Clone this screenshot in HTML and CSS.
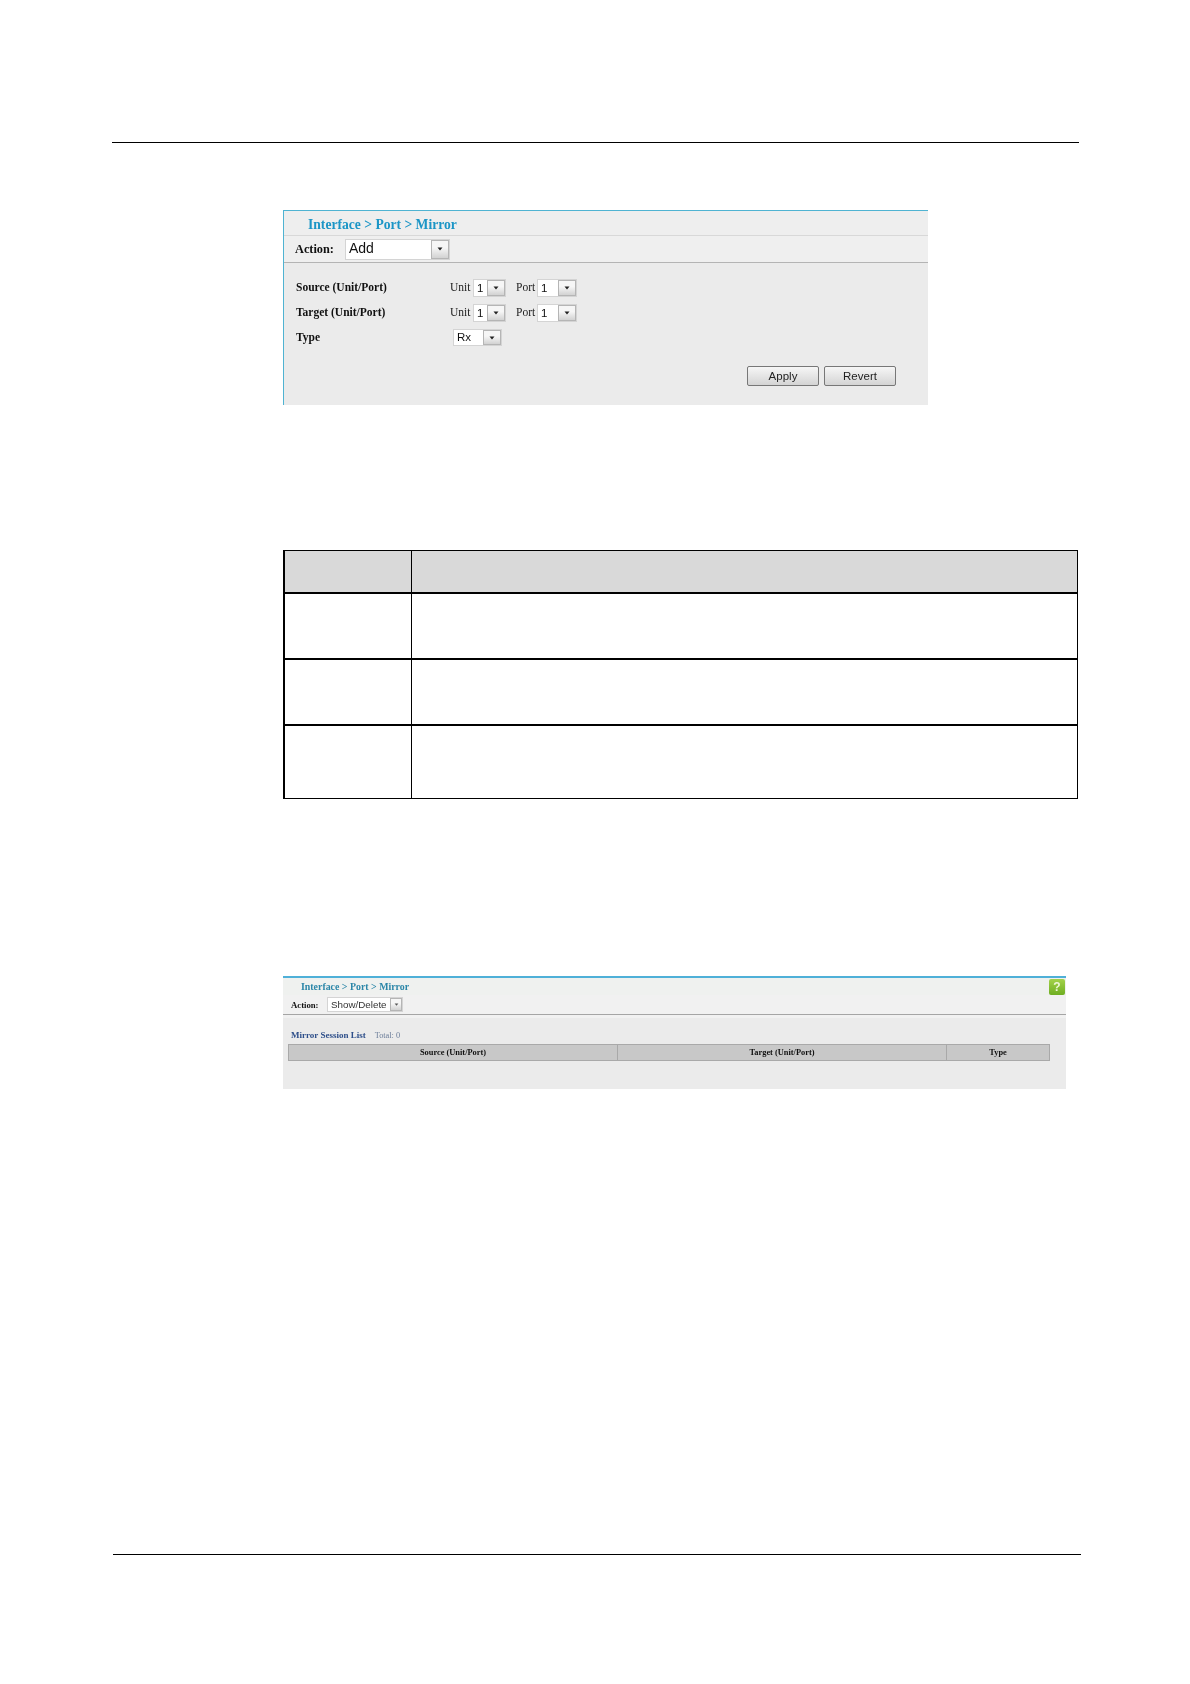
FILE: index.html
```html
<!DOCTYPE html>
<html lang="en">
<head>
    <meta charset="UTF-8">
    <meta name="viewport" content="width=device-width, initial-scale=1.0">
    <title>Interface &gt; Port &gt; Mirror</title>
    <link rel="stylesheet" href="styles.css">
</head>
<body>
    <div class="page">
        <div class="page-rule"></div>

        <!-- add form screenshot -->
        <div class="panel add-panel">
            <div class="add-title">Interface &gt; Port &gt; Mirror</div>
            <div class="add-action">
                <span class="action-label">Action:</span>
                <div class="select select-action">
                    <span class="select-text">Add</span>
                    <span class="select-btn"><svg width="6" height="4" viewBox="0 0 6 4"><path d="M0.5 0.5h5L3 3.5z" fill="#222"/></svg></span>
                </div>
            </div>
            <div class="add-form">
                <div class="form-row">
                    <span class="form-label">Source (Unit/Port)</span>
                    <span class="field-name unit-name">Unit</span>
                    <div class="select select-unit">
                        <span class="select-text">1</span>
                        <span class="select-btn"><svg width="6" height="4" viewBox="0 0 6 4"><path d="M0.5 0.5h5L3 3.5z" fill="#222"/></svg></span>
                    </div>
                    <span class="field-name port-name">Port</span>
                    <div class="select select-port">
                        <span class="select-text">1</span>
                        <span class="select-btn"><svg width="6" height="4" viewBox="0 0 6 4"><path d="M0.5 0.5h5L3 3.5z" fill="#222"/></svg></span>
                    </div>
                </div>
                <div class="form-row">
                    <span class="form-label">Target (Unit/Port)</span>
                    <span class="field-name unit-name">Unit</span>
                    <div class="select select-unit">
                        <span class="select-text">1</span>
                        <span class="select-btn"><svg width="6" height="4" viewBox="0 0 6 4"><path d="M0.5 0.5h5L3 3.5z" fill="#222"/></svg></span>
                    </div>
                    <span class="field-name port-name">Port</span>
                    <div class="select select-port">
                        <span class="select-text">1</span>
                        <span class="select-btn"><svg width="6" height="4" viewBox="0 0 6 4"><path d="M0.5 0.5h5L3 3.5z" fill="#222"/></svg></span>
                    </div>
                </div>
                <div class="form-row">
                    <span class="form-label">Type</span>
                    <div class="select select-type">
                        <span class="select-text">Rx</span>
                        <span class="select-btn"><svg width="6" height="4" viewBox="0 0 6 4"><path d="M0.5 0.5h5L3 3.5z" fill="#222"/></svg></span>
                    </div>
                </div>
            </div>
            <div class="add-buttons">
                <button class="btn" type="button">Apply</button>
                <button class="btn" type="button">Revert</button>
            </div>
        </div>

        <!-- parameter table, cells are empty in the source page -->
        <table class="params">
            <tr class="params-head"><th></th><th></th></tr>
            <tr class="params-row"><td></td><td></td></tr>
            <tr class="params-row"><td></td><td></td></tr>
            <tr class="params-row params-last"><td></td><td></td></tr>
        </table>

        <!-- session list screenshot -->
        <div class="panel list-panel">
            <div class="list-title">Interface &gt; Port &gt; Mirror</div>
            <span class="help-icon">?</span>
            <div class="list-action">
                <span class="list-action-label">Action:</span>
                <div class="select select-show">
                    <span class="select-text">Show/Delete</span>
                    <span class="select-btn"><svg width="5" height="3" viewBox="0 0 6 4"><path d="M0.5 0.5h5L3 3.5z" fill="#555"/></svg></span>
                </div>
            </div>
            <div class="list-body">
                <div class="list-caption"><b>Mirror Session List</b><span>Total: 0</span></div>
                <div class="list-head">
                    <div class="col-source">Source (Unit/Port)</div>
                    <div class="col-target">Target (Unit/Port)</div>
                    <div class="col-type">Type</div>
                </div>
            </div>
        </div>

        <div class="page-rule page-rule-bottom"></div>
    </div>
</body>
</html>
```

FILE: styles.css
```css
* {
    margin: 0;
    padding: 0;
    box-sizing: border-box;
}

body {
    background: white;
    font-family: 'Liberation Serif', 'Times New Roman', serif;
    color: #111;
}

.page {
    width: 1190px;
    height: 1684px;
    padding-top: 142px;
    overflow: hidden;
}

.page-rule {
    width: 967px;
    height: 1px;
    margin-left: 112px;
    background: #000;
}

.page-rule-bottom {
    width: 968px;
    margin-top: 465px;
    margin-left: 113px;
}

/* screenshot panels */
.panel {
    position: relative;
    background: #ebebeb;
}

.add-panel {
    width: 645px;
    height: 195px;
    margin: 67px 0 0 283px;
    border-top: 1px solid #4fb3d2;
    border-left: 1px solid #4fb3d2;
    filter: blur(0.25px);
}

.add-title {
    height: 25px;
    padding: 6px 0 0 24px;
    background: #eeeeee;
    border-bottom: 1px solid #d8d8d8;
    color: #1b95c6;
    font-size: 13.6px;
    font-weight: bold;
    line-height: 15px;
    white-space: nowrap;
}

.add-action {
    display: flex;
    align-items: center;
    height: 27px;
    background: #efefef;
    border-bottom: 1px solid #b4b4b4;
    padding-left: 11px;
}

.action-label {
    width: 50px;
    font-size: 12.3px;
    font-weight: bold;
}

/* fake drop-down list */
.select {
    display: flex;
    align-items: stretch;
    background: white;
    border: 1px solid #d4d4d4;
    font-family: 'Liberation Sans', Arial, sans-serif;
}

.select-text {
    flex: 1;
    white-space: nowrap;
}

.select-btn {
    display: flex;
    align-items: center;
    justify-content: center;
    border: 1px solid #b5b5b5;
    background: linear-gradient(#f6f6f6 40%, #d2d2d2);
}

.select-action {
    width: 105px;
    height: 21px;
    font-size: 14px;
    line-height: 17px;
}

.select-action .select-text {
    padding-left: 3px;
}

.select-action .select-btn {
    width: 18px;
}

.add-form {
    display: flex;
    flex-direction: column;
    gap: 7px;
    padding: 16px 0 0 12px;
}

.form-row {
    display: flex;
    align-items: center;
    height: 18px;
}

.form-label {
    width: 154px;
    padding-bottom: 2px;
    font-size: 11.5px;
    font-weight: bold;
    white-space: nowrap;
}

.field-name {
    padding-bottom: 2px;
    font-size: 11.5px;
    color: #222;
}

.unit-name {
    width: 23px;
}

.port-name {
    width: 21px;
    margin-left: 10px;
}

.select-unit,
.select-port,
.select-type {
    height: 18px;
    font-size: 11.5px;
    line-height: 16px;
}

.select-unit {
    width: 33px;
}

.select-port {
    width: 40px;
}

.select-type {
    align-self: flex-start;
    width: 49px;
    height: 17px;
    margin-left: 3px;
    line-height: 14px;
}

.select-unit .select-text,
.select-port .select-text,
.select-type .select-text {
    padding-left: 3px;
}

.select-unit .select-btn,
.select-port .select-btn,
.select-type .select-btn {
    width: 18px;
}

.add-buttons {
    display: flex;
    justify-content: flex-end;
    gap: 5px;
    margin-top: 19px;
    padding-right: 32px;
}

.btn {
    width: 72px;
    height: 20px;
    border: 1px solid #777;
    border-radius: 2px;
    background: linear-gradient(#f6f6f6, #d4d4d4);
    font-family: 'Liberation Sans', Arial, sans-serif;
    font-size: 11.5px;
    color: #222;
}

/* parameter table */
.params {
    width: 795px;
    height: 249px;
    margin: 145px 0 0 283px;
    border-collapse: separate;
    border-spacing: 0;
    table-layout: fixed;
    border-top: 1px solid #000;
    border-right: 1px solid #000;
    border-left: 2px solid #000;
}

.params th:first-child,
.params td:first-child {
    width: 127px;
    border-right: 1px solid #000;
}

.params-head {
    height: 43px;
    background: #d9d9d9;
}

.params-head th,
.params-row td {
    border-bottom: 2px solid #000;
}

.params-row {
    height: 66px;
}

.params-last {
    height: 73px;
}

.params-last td {
    border-bottom: 1px solid #000;
}

/* session list */
.list-panel {
    width: 783px;
    height: 113px;
    margin: 177px 0 0 283px;
    border-top: 2px solid #4fb0d8;
    filter: blur(0.4px);
}

.list-title {
    height: 17px;
    padding: 3px 0 0 18px;
    background: #eff1ef;
    color: #2b86a8;
    font-size: 9.9px;
    font-weight: bold;
    line-height: 12px;
}

.help-icon {
    position: absolute;
    top: 1px;
    right: 1px;
    width: 16px;
    height: 16px;
    border-radius: 2px;
    background: linear-gradient(#a3d24a, #6fae22);
    color: #eef7d8;
    font-family: 'Liberation Sans', Arial, sans-serif;
    font-size: 12px;
    font-weight: bold;
    line-height: 16px;
    text-align: center;
}

.list-action {
    display: flex;
    align-items: center;
    height: 20px;
    padding-left: 8px;
    background: #f1f1f1;
    border-bottom: 1px solid #a5a5a5;
}

.list-action-label {
    width: 36px;
    font-size: 8.7px;
    font-weight: bold;
}

.select-show {
    width: 76px;
    height: 15px;
    font-size: 9.8px;
    line-height: 13px;
    color: #333;
}

.select-show .select-text {
    padding-left: 3px;
}

.select-show .select-btn {
    width: 12px;
}

.list-body {
    height: 74px;
    border-top: 3px solid #f1f1f1;
    padding: 11px 0 0 5px;
}

.list-caption {
    height: 15px;
    padding-left: 3px;
    font-size: 9px;
    line-height: 12px;
    color: #2e4f8a;
}

.list-caption span {
    margin-left: 9px;
    font-size: 8.3px;
    color: #6a7c98;
}

.list-head {
    display: flex;
    width: 762px;
    height: 17px;
    background: #c8c8c8;
    border: 1px solid #a9a9a9;
    font-size: 8.4px;
    font-weight: bold;
    line-height: 15px;
    text-align: center;
}

.col-source {
    width: 329px;
    border-right: 1px solid #a9a9a9;
}

.col-target {
    width: 329px;
    border-right: 1px solid #a9a9a9;
}

.col-type {
    flex: 1;
}
```
